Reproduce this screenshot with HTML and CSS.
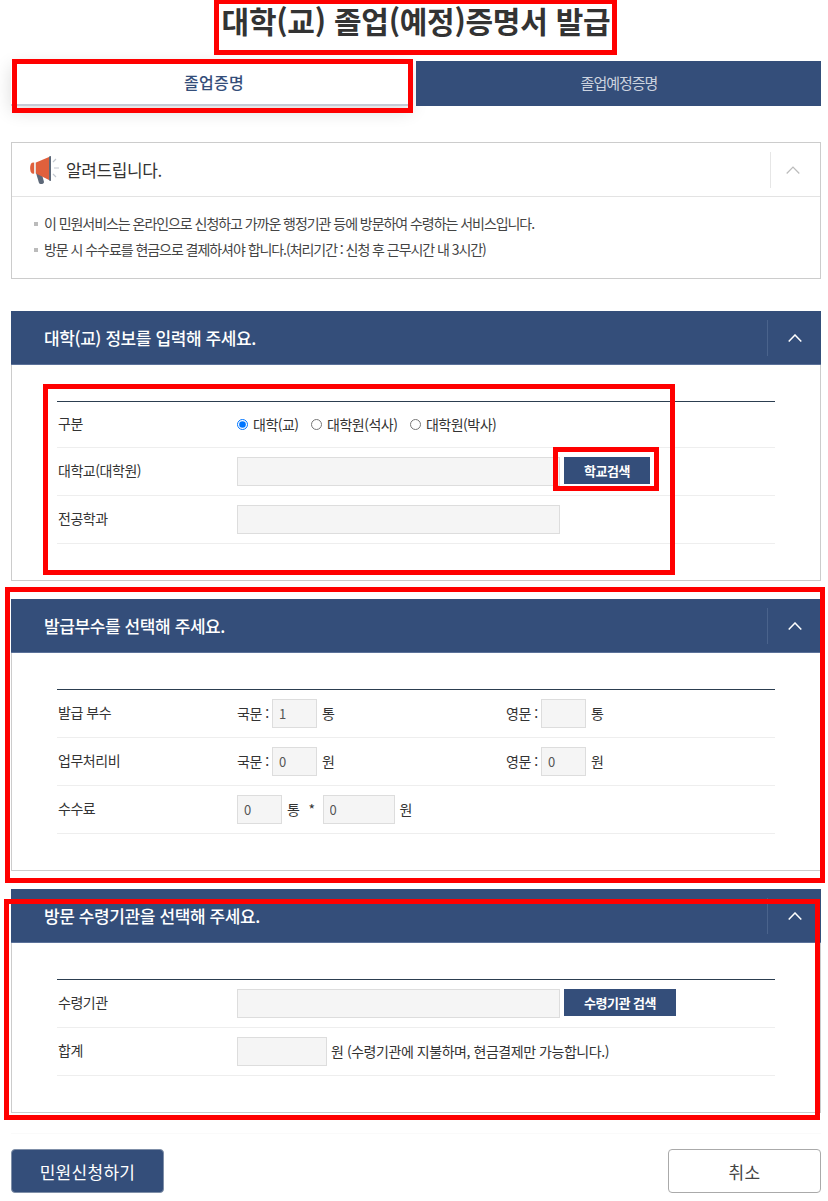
FILE: index.html
```html
<!DOCTYPE html>
<html lang="ko">
<head>
<meta charset="utf-8">
<title>대학(교) 졸업(예정)증명서 발급</title>
<link rel="stylesheet" href="styles.css">
</head>
<body>
<main class="page">
  <h1 class="title">대학(교) 졸업(예정)증명서 발급</h1>
  <div class="tabs">
    <a class="tab tab-on">졸업증명</a>
    <a class="tab">졸업예정증명</a>
  </div>

  <section class="notice">
    <header class="notice-head">
      <svg class="horn" viewBox="0 0 40 36" width="40" height="36" aria-hidden="true">
        <path d="M11 21l5.500-.5 2.500 9.500c.3 2-4 3-5 1z" fill="#5d6878"/>
        <path d="M9 10.500l-2 .3C4.500 12 4.500 20 7 21.500l2 .3z" fill="#e0603c"/>
        <path d="M9.300 10.400h1.700v11.200H9.300z" fill="#e9d9d2"/>
        <path d="M11 10.500L24 5v23L11 21.500z" fill="#e0603c"/>
        <path d="M24 4.500l2-.5v25l-2-.5z" fill="#5d6878"/>
        <path d="M28 10l3-3M29 16h5M28 22l3 3" stroke="#c3c8cf" stroke-width="1.200" fill="none"/>
      </svg>
      <h2 class="notice-title">알려드립니다.</h2>
      <span class="toggle toggle-light">
        <svg viewBox="0 0 14 8" width="14" height="8" aria-hidden="true"><path d="M.7 7.500L7 1l6.300 6.500" fill="none" stroke="#bbb" stroke-width="1.200"/></svg>
      </span>
    </header>
    <ul class="notice-list">
      <li>이 민원서비스는 온라인으로 신청하고 가까운 행정기관 등에 방문하여 수령하는 서비스입니다.</li>
      <li>방문 시 수수료를 현금으로 결제하셔야 합니다.(처리기간 : 신청 후 근무시간 내 3시간)</li>
    </ul>
  </section>

  <section class="panel panel-first">
    <header class="panel-head">
      <h2 class="panel-title">대학(교) 정보를 입력해 주세요.</h2>
      <span class="toggle">
        <svg viewBox="0 0 14 8" width="14" height="8" aria-hidden="true"><path d="M.7 7.500L7 1l6.300 6.500" fill="none" stroke="#fff" stroke-width="1.500"/></svg>
      </span>
    </header>
    <div class="panel-body">
      <div class="rows">
        <div class="row row-radio">
          <div class="label">구분</div>
          <div class="value radios">
            <label class="radio"><input type="radio" name="kind" checked><span>대학(교)</span></label>
            <label class="radio"><input type="radio" name="kind"><span>대학원(석사)</span></label>
            <label class="radio"><input type="radio" name="kind"><span>대학원(박사)</span></label>
          </div>
        </div>
        <div class="row">
          <div class="label">대학교(대학원)</div>
          <div class="value">
            <input class="field field-wide" type="text" readonly>
            <button class="btn-small btn-school" type="button">학교검색</button>
          </div>
        </div>
        <div class="row">
          <div class="label">전공학과</div>
          <div class="value"><input class="field field-wide" type="text" readonly></div>
        </div>
      </div>
    </div>
  </section>

  <section class="panel">
    <header class="panel-head">
      <h2 class="panel-title">발급부수를 선택해 주세요.</h2>
      <span class="toggle">
        <svg viewBox="0 0 14 8" width="14" height="8" aria-hidden="true"><path d="M.7 7.500L7 1l6.300 6.500" fill="none" stroke="#fff" stroke-width="1.500"/></svg>
      </span>
    </header>
    <div class="panel-body">
      <div class="rows">
        <div class="row">
          <div class="label">발급 부수</div>
          <div class="value halves">
            <div class="half"><span class="pre">국문 :</span><input class="field field-s" type="text" value="1" readonly><span>통</span></div>
            <div class="half"><span class="pre">영문 :</span><input class="field field-s" type="text" readonly><span>통</span></div>
          </div>
        </div>
        <div class="row">
          <div class="label">업무처리비</div>
          <div class="value halves">
            <div class="half"><span class="pre">국문 :</span><input class="field field-s" type="text" value="0" readonly><span>원</span></div>
            <div class="half"><span class="pre">영문 :</span><input class="field field-s" type="text" value="0" readonly><span>원</span></div>
          </div>
        </div>
        <div class="row">
          <div class="label">수수료</div>
          <div class="value">
            <input class="field field-s" type="text" value="0" readonly><span>통</span><span class="times">*</span><input class="field field-m" type="text" value="0" readonly><span>원</span>
          </div>
        </div>
      </div>
    </div>
  </section>

  <section class="panel">
    <header class="panel-head">
      <h2 class="panel-title">방문 수령기관을 선택해 주세요.</h2>
      <span class="toggle">
        <svg viewBox="0 0 14 8" width="14" height="8" aria-hidden="true"><path d="M.7 7.500L7 1l6.300 6.500" fill="none" stroke="#fff" stroke-width="1.500"/></svg>
      </span>
    </header>
    <div class="panel-body">
      <div class="rows">
        <div class="row">
          <div class="label">수령기관</div>
          <div class="value">
            <input class="field field-wide" type="text" readonly>
            <button class="btn-small btn-agency" type="button">수령기관 검색</button>
          </div>
        </div>
        <div class="row">
          <div class="label">합계</div>
          <div class="value">
            <input class="field field-l" type="text" readonly><span>원 (수령기관에 지불하며, 현금결제만 가능합니다.)</span>
          </div>
        </div>
      </div>
    </div>
  </section>

  <footer class="actions">
    <button class="action action-main" type="button">민원신청하기</button>
    <button class="action" type="button">취소</button>
  </footer>
</main>

<div class="mark mark-title"></div>
<div class="mark mark-tab"></div>
<div class="mark mark-form"></div>
<div class="mark mark-search"></div>
<div class="mark mark-copies"></div>
<div class="mark mark-agency"></div>
</body>
</html>
```
FILE: styles.css
```css
* { box-sizing: border-box; }
html, body { margin: 0; padding: 0; background: #fff; }
body {
  position: relative;
  height: 1201px;
  overflow: hidden;
  font-family: "Noto Sans CJK KR", "Noto Sans", sans-serif;
  font-size: 14px;
  color: #333;
  letter-spacing: -.45px;
}
.page { width: 810px; margin-left: 11px; }
.title {
  margin: 0;
  height: 61px;
  font-size: 30px;
  line-height: 40px;
  font-weight: 700;
  text-align: center;
  color: #333;
  letter-spacing: -.25px;
}
.tabs { display: flex; gap: 5px; height: 45px; }
.tab {
  flex: 1;
  display: flex;
  align-items: center;
  justify-content: center;
  padding: 0 0 3px 1px;
  background: #344e7a;
  color: #ccd3df;
  font-size: 15px;
  letter-spacing: -1px;
}
.tab-on {
  flex: 0 0 400px;
  padding: 0 0 1px 6px;
  background: #fff;
  color: #344e7a;
  font-weight: 500;
  font-size: 16px;
  letter-spacing: .3px;
  border-bottom: 2px solid #c5cad6;
  box-shadow: 0 5px 18px rgba(0, 0, 0, .14);
}
.tab:last-child { flex: 0 0 405px; }

.notice {
  margin-top: 36px;
  height: 137px;
  border: 1px solid #ccc;
}
.notice-head {
  display: flex;
  align-items: center;
  height: 54px;
  padding-left: 13px;
  border-bottom: 1px solid #e3e3e3;
}
.horn { flex: none; margin-right: 1px; }
.notice-title {
  margin: 0;
  font-size: 17px;
  font-weight: 400;
  color: #333;
  letter-spacing: -.4px;
}
.toggle {
  margin-left: auto;
  flex: none;
  display: flex;
  align-items: center;
  justify-content: center;
  width: 54px;
  height: 36px;
  border-left: 1px solid #4a638c;
}
.toggle-light { width: 50px; padding-right: 6px; border-left-color: #e6e6e6; }
.notice-list {
  list-style: none;
  margin: 0;
  padding: 13px 0 0 32px;
  font-size: 14px;
  line-height: 26px;
  letter-spacing: -1.05px;
  color: #444;
}
.notice-list li { position: relative; }
.notice-list li::before {
  content: "";
  position: absolute;
  left: -10px;
  top: 12px;
  width: 4px;
  height: 4px;
  background: #bbb;
}

.panel { margin-top: 18px; border: 1px solid #ccc; border-top: 0; }
.panel-first { margin-top: 32px; }
.panel-head {
  display: flex;
  align-items: center;
  height: 54px;
  margin: 0 -1px;
  padding-left: 33px;
  background: #344e7a;
  border-bottom: 1px solid #5b7199;
}
.panel-title {
  margin: 0;
  color: #fff;
  font-size: 17px;
  font-weight: 500;
  letter-spacing: -.4px;
}
.panel-body { padding: 36px 45px; }
.rows { border-top: 1px solid #2c3e50; }
.row {
  display: flex;
  align-items: center;
  height: 48px;
  border-bottom: 1px solid #eee;
}
.row-radio { height: 46px; }
.label { flex: 0 0 180px; padding: 0 0 3px 1px; color: #333; }
.value { flex: 1; display: flex; align-items: center; gap: 5px; }
.value span { padding-bottom: 2px; }
.radios { gap: 12.500px; letter-spacing: -.5px; }
.radio { display: flex; align-items: center; gap: 5px; }
.radio input { margin: 0; width: 11px; height: 11px; }
.halves { gap: 0; }
.half { flex: 0 0 269px; display: flex; align-items: center; }
.pre { width: 35px; flex: none; }
.half input { margin-right: 5px; }
.field {
  height: 29px;
  padding: 0 6px;
  background: #f5f5f5;
  border: 1px solid #ddd;
  border-radius: 0;
  font: inherit;
  font-size: 13px;
  color: #555;
  outline: 0;
}
.field-wide { width: 323px; }
.field-s { width: 45px; }
.field-m { width: 72px; margin-left: -1px; }
.field-l { width: 90px; margin-right: -1px; }
.times { margin: 0 4px; }
.btn-small {
  height: 27px;
  margin-top: -2px;
  margin-left: -1px;
  border: 0;
  background: #344e7a;
  color: #fff;
  font: inherit;
  font-size: 13px;
  font-weight: 700;
  letter-spacing: -.5px;
}
.btn-school { width: 86px; }
.btn-agency { width: 112px; }

.actions {
  display: flex;
  justify-content: space-between;
  margin-top: 20px;
  padding-top: 15px;
  border-top: 1px solid #fafafa;
}
.action {
  width: 153px;
  height: 44px;
  background: #fff;
  border: 1px solid #aaa;
  border-radius: 4px;
  font: inherit;
  font-size: 17px;
  color: #444;
  letter-spacing: .3px;
}
.action-main { background: #344e7a; border-color: #7f8fa8; color: #fff; }

.mark {
  position: absolute;
  border: 5px solid #f00;
  pointer-events: none;
}
.mark-title { left: 214px; top: 0; width: 403px; height: 55px; border-top-width: 4px; }
.mark-tab { left: 12px; top: 59px; width: 401px; height: 54px; }
.mark-form { left: 43px; top: 384px; width: 632px; height: 191px; }
.mark-search { left: 553px; top: 447px; width: 106px; height: 44px; }
.mark-copies { left: 5px; top: 587px; width: 820px; height: 296px; }
.mark-agency { left: 4px; top: 899px; width: 816px; height: 221px; }
```
